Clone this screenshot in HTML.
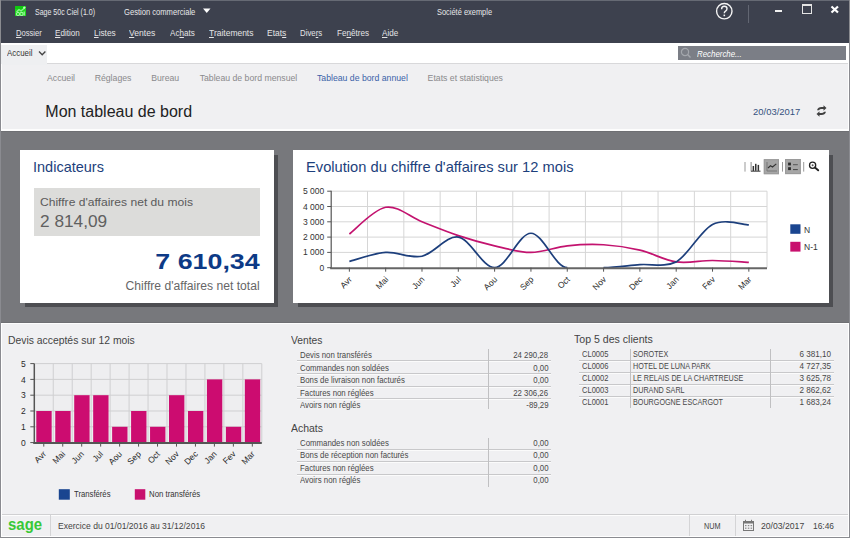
<!DOCTYPE html><html><head><meta charset="utf-8"><style>
html,body{margin:0;padding:0;}
body{width:850px;height:538px;position:relative;overflow:hidden;background:#f0f0f2;font-family:"Liberation Sans",sans-serif;}
div{box-sizing:border-box;}
</style></head><body>
<div style="position:absolute;left:0px;top:0px;width:850px;height:43px;background:#3d414e;"></div>
<div style="position:absolute;left:0px;top:0px;width:850px;height:1px;background:#666a74;"></div>
<div style="position:absolute;top:8.20px;font-size:8.5px;line-height:8.5px;color:#e8e8ea;white-space:pre;left:34.6px;transform:scaleX(0.825);transform-origin:0 0;">Sage 50c Ciel (1.0)</div>
<div style="position:absolute;top:7.85px;font-size:8.8px;line-height:8.8px;color:#e8e8ea;white-space:pre;left:124.1px;transform:scaleX(0.863);transform-origin:0 0;">Gestion commerciale</div>
<svg style="position:absolute;left:203px;top:8px" width="8" height="6"><polygon points="0,0.5 7.5,0.5 3.75,5" fill="#fff"/></svg>
<div style="position:absolute;top:7.85px;font-size:8.8px;line-height:8.8px;color:#e8e8ea;white-space:pre;left:437px;transform:scaleX(0.846);transform-origin:0 0;">Société exemple</div>
<svg style="position:absolute;left:15px;top:6px" width="11" height="10"><rect width="11" height="10" fill="#1fd21f"/><rect width="11" height="3" fill="#10c810"/><path d="M1.5 6 L4 3.5 L6 5 L9.5 2" fill="none" stroke="#8cf58c" stroke-width="1.3"/><circle cx="9.3" cy="1.6" r="1.2" fill="#b8ffb8"/><circle cx="3" cy="8" r="1.6" fill="none" stroke="#9cf79c" stroke-width="1.1"/><circle cx="6.5" cy="8" r="1.6" fill="none" stroke="#9cf79c" stroke-width="1.1"/><path d="M9.2 5.5 V9.5" stroke="#9cf79c" stroke-width="1.2"/></svg>
<svg style="position:absolute;left:714px;top:1px" width="22" height="22"><circle cx="10.3" cy="10.2" r="7.7" fill="none" stroke="#f4f4f4" stroke-width="1.4"/><path d="M7.6 8.2 Q7.6 5.3 10.3 5.3 Q13 5.3 13 7.8 Q13 9.3 11.3 10.3 Q10.3 10.9 10.3 12.3" fill="none" stroke="#f4f4f4" stroke-width="1.4"/><rect x="9.5" y="13.6" width="1.6" height="1.6" fill="#f4f4f4"/></svg>
<div style="position:absolute;left:748px;top:5px;width:1px;height:18px;background:#626672;"></div>
<div style="position:absolute;left:774.5px;top:10px;width:7.5px;height:2px;background:#f0f0f0;"></div>
<svg style="position:absolute;left:801px;top:3px" width="13" height="13"><rect x="1.5" y="1.5" width="9" height="9" fill="none" stroke="#e4e4e4" stroke-width="1"/><rect x="1" y="1" width="10" height="2" fill="#e4e4e4"/></svg>
<svg style="position:absolute;left:830px;top:5px" width="10" height="9"><path d="M1.5 1.5 L8 7.5 M8 1.5 L1.5 7.5" stroke="#fff" stroke-width="2.2"/></svg>
<div style="position:absolute;top:28.95px;font-size:8.8px;line-height:8.8px;color:#e4e4e6;white-space:pre;left:15.8px;transform:scaleX(0.862);transform-origin:0 0;"><u style="text-underline-offset:0.5px">D</u>ossier</div>
<div style="position:absolute;top:28.95px;font-size:8.8px;line-height:8.8px;color:#e4e4e6;white-space:pre;left:55.3px;transform:scaleX(0.918);transform-origin:0 0;"><u style="text-underline-offset:0.5px">E</u>dition</div>
<div style="position:absolute;top:28.95px;font-size:8.8px;line-height:8.8px;color:#e4e4e6;white-space:pre;left:93.9px;transform:scaleX(0.943);transform-origin:0 0;"><u style="text-underline-offset:0.5px">L</u>istes</div>
<div style="position:absolute;top:28.95px;font-size:8.8px;line-height:8.8px;color:#e4e4e6;white-space:pre;left:129.4px;transform:scaleX(0.973);transform-origin:0 0;"><u style="text-underline-offset:0.5px">V</u>entes</div>
<div style="position:absolute;top:28.95px;font-size:8.8px;line-height:8.8px;color:#e4e4e6;white-space:pre;left:170px;transform:scaleX(0.917);transform-origin:0 0;">Ac<u style="text-underline-offset:0.5px">h</u>ats</div>
<div style="position:absolute;top:28.95px;font-size:8.8px;line-height:8.8px;color:#e4e4e6;white-space:pre;left:209px;transform:scaleX(0.964);transform-origin:0 0;"><u style="text-underline-offset:0.5px">T</u>raitements</div>
<div style="position:absolute;top:28.95px;font-size:8.8px;line-height:8.8px;color:#e4e4e6;white-space:pre;left:267.3px;transform:scaleX(0.962);transform-origin:0 0;">Etat<u style="text-underline-offset:0.5px">s</u></div>
<div style="position:absolute;top:28.95px;font-size:8.8px;line-height:8.8px;color:#e4e4e6;white-space:pre;left:300.4px;transform:scaleX(0.890);transform-origin:0 0;">Dive<u style="text-underline-offset:0.5px">r</u>s</div>
<div style="position:absolute;top:28.95px;font-size:8.8px;line-height:8.8px;color:#e4e4e6;white-space:pre;left:336.5px;transform:scaleX(0.924);transform-origin:0 0;">Fe<u style="text-underline-offset:0.5px">n</u>êtres</div>
<div style="position:absolute;top:28.95px;font-size:8.8px;line-height:8.8px;color:#e4e4e6;white-space:pre;left:382px;transform:scaleX(0.919);transform-origin:0 0;"><u style="text-underline-offset:0.5px">A</u>ide</div>
<div style="position:absolute;left:0px;top:43px;width:850px;height:21px;background:#ffffff;"></div>
<div style="position:absolute;left:1px;top:45px;width:46px;height:20px;background:#eeeff1;"></div>
<div style="position:absolute;top:49.05px;font-size:8.8px;line-height:8.8px;color:#333;white-space:pre;left:6.7px;transform:scaleX(0.896);transform-origin:0 0;">Accueil</div>
<svg style="position:absolute;left:38px;top:50px" width="9" height="7"><path d="M1 1.5 L4.2 4.8 L7.4 1.5" fill="none" stroke="#444" stroke-width="1.3"/></svg>
<div style="position:absolute;left:47px;top:63px;width:801px;height:1px;background:#d8d8da;"></div>
<div style="position:absolute;left:678px;top:46px;width:168px;height:14px;background:#7b7e86;"></div>
<svg style="position:absolute;left:680px;top:47px" width="12" height="12"><circle cx="5" cy="5" r="3.6" fill="none" stroke="#a4a7ad" stroke-width="1.2"/><path d="M7.6 7.6 L10.5 10.5" stroke="#a4a7ad" stroke-width="1.4"/></svg>
<div style="position:absolute;top:50.00px;font-size:8.5px;line-height:8.5px;color:#ffffff;white-space:pre;font-style:italic;left:696.9px;transform:scaleX(0.927);transform-origin:0 0;">Recherche...</div>
<div style="position:absolute;top:73.94px;font-size:8.7px;line-height:8.7px;color:#8a8a8c;white-space:pre;left:47px;">Accueil</div>
<div style="position:absolute;top:73.94px;font-size:8.7px;line-height:8.7px;color:#8a8a8c;white-space:pre;left:94.7px;">Réglages</div>
<div style="position:absolute;top:73.94px;font-size:8.7px;line-height:8.7px;color:#8a8a8c;white-space:pre;left:151.2px;">Bureau</div>
<div style="position:absolute;top:73.94px;font-size:8.7px;line-height:8.7px;color:#8a8a8c;white-space:pre;left:199.7px;">Tableau de bord mensuel</div>
<div style="position:absolute;top:73.94px;font-size:8.7px;line-height:8.7px;color:#3a62a8;white-space:pre;left:317px;">Tableau de bord annuel</div>
<div style="position:absolute;top:73.94px;font-size:8.7px;line-height:8.7px;color:#8a8a8c;white-space:pre;left:427.6px;">Etats et statistiques</div>
<div style="position:absolute;top:103.56px;font-size:16px;line-height:16px;color:#222;white-space:pre;left:45.3px;">Mon tableau de bord</div>
<div style="position:absolute;top:107.30px;font-size:9.8px;line-height:9.8px;color:#34527e;white-space:pre;left:752.9px;transform:scaleX(0.964);transform-origin:0 0;">20/03/2017</div>
<svg style="position:absolute;left:815px;top:105px" width="13" height="12"><path d="M2 5.2 Q3 2 6.5 2 L8.5 2 L8.5 0.3 L11.5 3 L8.5 5.7 L8.5 4 L6.5 4 Q4.6 4 4 5.2 Z" fill="#404040"/><path d="M11 6.8 Q10 10 6.5 10 L4.5 10 L4.5 11.7 L1.5 9 L4.5 6.3 L4.5 8 L6.5 8 Q8.4 8 9 6.8 Z" fill="#404040"/></svg>
<div style="position:absolute;left:0px;top:131px;width:850px;height:192px;background:#77787c;"></div>
<div style="position:absolute;left:0px;top:129px;width:850px;height:2px;background:#fdfdfd;"></div>
<div style="position:absolute;left:0px;top:131px;width:850px;height:1px;background:#6e6f73;"></div>
<div style="position:absolute;left:0px;top:322px;width:850px;height:1px;background:#6e6f73;"></div>
<div style="position:absolute;left:0px;top:323px;width:850px;height:1px;background:#fdfdfd;"></div>
<div style="position:absolute;left:25px;top:155px;width:253px;height:152px;background:#4d4e52;"></div>
<div style="position:absolute;left:20px;top:150px;width:254px;height:153px;background:#ffffff;"></div>
<div style="position:absolute;left:298px;top:155px;width:535px;height:152px;background:#4d4e52;"></div>
<div style="position:absolute;left:293px;top:150px;width:536px;height:153px;background:#ffffff;"></div>
<div style="position:absolute;top:160.03px;font-size:14.5px;line-height:14.5px;color:#1d3f7c;white-space:pre;left:33px;">Indicateurs</div>
<div style="position:absolute;left:34px;top:188px;width:226px;height:48px;background:#dcdcda;"></div>
<div style="position:absolute;top:197.29px;font-size:11px;line-height:11px;color:#5a5a5a;white-space:pre;left:40.4px;transform:scaleX(1.098);transform-origin:0 0;">Chiffre d'affaires net du mois</div>
<div style="position:absolute;top:212.73px;font-size:16.5px;line-height:16.5px;color:#606060;white-space:pre;left:40.4px;transform:scaleX(1.045);transform-origin:0 0;">2 814,09</div>
<div style="position:absolute;top:251.38px;font-size:22px;line-height:22px;color:#0d3a86;white-space:pre;font-weight:bold;right:590.3px;transform:scaleX(1.218);transform-origin:100% 0;">7 610,34</div>
<div style="position:absolute;top:280.34px;font-size:12px;line-height:12px;color:#666;white-space:pre;right:590.3px;transform:scaleX(1.011);transform-origin:100% 0;">Chiffre d'affaires net total</div>
<div style="position:absolute;top:160.14px;font-size:14.6px;line-height:14.6px;color:#1d3f7c;white-space:pre;left:305.9px;transform:scaleX(1.006);transform-origin:0 0;">Evolution du chiffre d'affaires sur 12 mois</div>
<svg style="position:absolute;left:0;top:0" width="850" height="538">
<line x1="331.2" y1="252.40" x2="767.0" y2="252.40" stroke="#d6d6d6" stroke-width="1"/>
<line x1="331.2" y1="237.10" x2="767.0" y2="237.10" stroke="#d6d6d6" stroke-width="1"/>
<line x1="331.2" y1="221.80" x2="767.0" y2="221.80" stroke="#d6d6d6" stroke-width="1"/>
<line x1="331.2" y1="206.50" x2="767.0" y2="206.50" stroke="#d6d6d6" stroke-width="1"/>
<line x1="331.2" y1="191.20" x2="767.0" y2="191.20" stroke="#d6d6d6" stroke-width="1"/>
<line x1="367.52" y1="191.2" x2="367.52" y2="267.7" stroke="#d6d6d6" stroke-width="1"/>
<line x1="403.83" y1="191.2" x2="403.83" y2="267.7" stroke="#d6d6d6" stroke-width="1"/>
<line x1="440.15" y1="191.2" x2="440.15" y2="267.7" stroke="#d6d6d6" stroke-width="1"/>
<line x1="476.47" y1="191.2" x2="476.47" y2="267.7" stroke="#d6d6d6" stroke-width="1"/>
<line x1="512.78" y1="191.2" x2="512.78" y2="267.7" stroke="#d6d6d6" stroke-width="1"/>
<line x1="549.10" y1="191.2" x2="549.10" y2="267.7" stroke="#d6d6d6" stroke-width="1"/>
<line x1="585.42" y1="191.2" x2="585.42" y2="267.7" stroke="#d6d6d6" stroke-width="1"/>
<line x1="621.73" y1="191.2" x2="621.73" y2="267.7" stroke="#d6d6d6" stroke-width="1"/>
<line x1="658.05" y1="191.2" x2="658.05" y2="267.7" stroke="#d6d6d6" stroke-width="1"/>
<line x1="694.37" y1="191.2" x2="694.37" y2="267.7" stroke="#d6d6d6" stroke-width="1"/>
<line x1="730.68" y1="191.2" x2="730.68" y2="267.7" stroke="#d6d6d6" stroke-width="1"/>
<line x1="767.00" y1="191.2" x2="767.00" y2="267.7" stroke="#d6d6d6" stroke-width="1"/>
<path d="M349.36 234.04 C355.41 229.58 373.57 209.30 385.68 207.26 C397.78 205.22 409.89 217.08 421.99 221.80 C434.10 226.52 446.20 231.57 458.31 235.57 C470.41 239.57 482.52 243.02 494.62 245.82 C506.73 248.63 518.84 252.40 530.94 252.40 C543.05 252.40 555.15 247.10 567.26 245.82 C579.36 244.55 591.47 244.04 603.58 244.75 C615.68 245.46 627.79 247.25 639.89 250.10 C652.00 252.96 664.10 260.15 676.21 261.89 C688.31 263.62 700.42 260.43 712.53 260.51 C724.63 260.59 742.79 262.04 748.84 262.34" fill="none" stroke="#c3136f" stroke-width="1.7"/>
<path d="M349.36 261.40 C355.41 259.90 373.57 253.26 385.68 252.40 C397.78 251.54 409.89 258.77 421.99 256.22 C434.10 253.67 446.20 235.19 458.31 237.10 C470.41 239.01 482.52 267.70 494.62 267.70 C506.73 267.70 518.84 233.27 530.94 233.27 C543.05 233.27 555.15 267.70 567.26 267.70 M603.58 267.70 C615.68 267.70 627.79 265.61 639.89 264.64 C652.00 263.67 664.10 267.70 676.21 261.89 C688.31 255.18 700.42 230.57 712.53 224.40 C724.63 218.23 742.79 224.78 748.84 224.86" fill="none" stroke="#1d3f7c" stroke-width="1.7"/>
<line x1="331.2" y1="190.7" x2="331.2" y2="268.7" stroke="#555" stroke-width="1.2"/>
<line x1="330.2" y1="268.2" x2="767.0" y2="268.2" stroke="#666" stroke-width="2"/>
<line x1="327.2" y1="267.70" x2="331.2" y2="267.70" stroke="#555" stroke-width="1"/>
<line x1="327.2" y1="252.40" x2="331.2" y2="252.40" stroke="#555" stroke-width="1"/>
<line x1="327.2" y1="237.10" x2="331.2" y2="237.10" stroke="#555" stroke-width="1"/>
<line x1="327.2" y1="221.80" x2="331.2" y2="221.80" stroke="#555" stroke-width="1"/>
<line x1="327.2" y1="206.50" x2="331.2" y2="206.50" stroke="#555" stroke-width="1"/>
<line x1="327.2" y1="191.20" x2="331.2" y2="191.20" stroke="#555" stroke-width="1"/>
<line x1="349.36" y1="267.7" x2="349.36" y2="271.7" stroke="#555" stroke-width="1"/>
<line x1="385.68" y1="267.7" x2="385.68" y2="271.7" stroke="#555" stroke-width="1"/>
<line x1="421.99" y1="267.7" x2="421.99" y2="271.7" stroke="#555" stroke-width="1"/>
<line x1="458.31" y1="267.7" x2="458.31" y2="271.7" stroke="#555" stroke-width="1"/>
<line x1="494.62" y1="267.7" x2="494.62" y2="271.7" stroke="#555" stroke-width="1"/>
<line x1="530.94" y1="267.7" x2="530.94" y2="271.7" stroke="#555" stroke-width="1"/>
<line x1="567.26" y1="267.7" x2="567.26" y2="271.7" stroke="#555" stroke-width="1"/>
<line x1="603.58" y1="267.7" x2="603.58" y2="271.7" stroke="#555" stroke-width="1"/>
<line x1="639.89" y1="267.7" x2="639.89" y2="271.7" stroke="#555" stroke-width="1"/>
<line x1="676.21" y1="267.7" x2="676.21" y2="271.7" stroke="#555" stroke-width="1"/>
<line x1="712.53" y1="267.7" x2="712.53" y2="271.7" stroke="#555" stroke-width="1"/>
<line x1="748.84" y1="267.7" x2="748.84" y2="271.7" stroke="#555" stroke-width="1"/>
<text x="352.56" y="280.00" transform="rotate(-45 352.56 280.00)" text-anchor="end" font-family="Liberation Sans" font-size="8.5" fill="#2a2a2a">Avr</text>
<text x="388.88" y="280.00" transform="rotate(-45 388.88 280.00)" text-anchor="end" font-family="Liberation Sans" font-size="8.5" fill="#2a2a2a">Mai</text>
<text x="425.19" y="280.00" transform="rotate(-45 425.19 280.00)" text-anchor="end" font-family="Liberation Sans" font-size="8.5" fill="#2a2a2a">Jun</text>
<text x="461.51" y="280.00" transform="rotate(-45 461.51 280.00)" text-anchor="end" font-family="Liberation Sans" font-size="8.5" fill="#2a2a2a">Jul</text>
<text x="497.82" y="280.00" transform="rotate(-45 497.82 280.00)" text-anchor="end" font-family="Liberation Sans" font-size="8.5" fill="#2a2a2a">Aou</text>
<text x="534.14" y="280.00" transform="rotate(-45 534.14 280.00)" text-anchor="end" font-family="Liberation Sans" font-size="8.5" fill="#2a2a2a">Sep</text>
<text x="570.46" y="280.00" transform="rotate(-45 570.46 280.00)" text-anchor="end" font-family="Liberation Sans" font-size="8.5" fill="#2a2a2a">Oct</text>
<text x="606.78" y="280.00" transform="rotate(-45 606.78 280.00)" text-anchor="end" font-family="Liberation Sans" font-size="8.5" fill="#2a2a2a">Nov</text>
<text x="643.09" y="280.00" transform="rotate(-45 643.09 280.00)" text-anchor="end" font-family="Liberation Sans" font-size="8.5" fill="#2a2a2a">Dec</text>
<text x="679.41" y="280.00" transform="rotate(-45 679.41 280.00)" text-anchor="end" font-family="Liberation Sans" font-size="8.5" fill="#2a2a2a">Jan</text>
<text x="715.73" y="280.00" transform="rotate(-45 715.73 280.00)" text-anchor="end" font-family="Liberation Sans" font-size="8.5" fill="#2a2a2a">Fev</text>
<text x="752.04" y="280.00" transform="rotate(-45 752.04 280.00)" text-anchor="end" font-family="Liberation Sans" font-size="8.5" fill="#2a2a2a">Mar</text>
<text x="324.2" y="270.70" text-anchor="end" font-family="Liberation Sans" font-size="8.5" fill="#333">0</text>
<text x="324.2" y="255.40" text-anchor="end" font-family="Liberation Sans" font-size="8.5" fill="#333">1 000</text>
<text x="324.2" y="240.10" text-anchor="end" font-family="Liberation Sans" font-size="8.5" fill="#333">2 000</text>
<text x="324.2" y="224.80" text-anchor="end" font-family="Liberation Sans" font-size="8.5" fill="#333">3 000</text>
<text x="324.2" y="209.50" text-anchor="end" font-family="Liberation Sans" font-size="8.5" fill="#333">4 000</text>
<text x="324.2" y="194.20" text-anchor="end" font-family="Liberation Sans" font-size="8.5" fill="#333">5 000</text>
<rect x="790.3" y="224.3" width="10.2" height="9.5" fill="#1a4590"/>
<rect x="790.3" y="241.8" width="10.2" height="9.8" fill="#c8106e"/>
<text x="804" y="232.5" font-family="Liberation Sans" font-size="8.5" fill="#333">N</text>
<text x="804" y="250" font-family="Liberation Sans" font-size="8.5" fill="#333">N-1</text>
<rect x="744.5" y="162" width="1" height="9.6" fill="#999"/>
<rect x="782" y="162" width="1" height="9.6" fill="#999"/>
<rect x="803.2" y="162" width="1" height="9.6" fill="#999"/>
<rect x="750.6" y="162" width="1" height="9.5" fill="#888"/><rect x="751" y="170.6" width="9.5" height="1.2" fill="#555"/>
<rect x="752.6" y="166" width="1.5" height="5" fill="#333"/><rect x="755" y="163.8" width="1.5" height="7" fill="#333"/><rect x="757.6" y="164.9" width="1.5" height="6" fill="#333"/>
<rect x="763.8" y="159.2" width="15.2" height="15" fill="#a6a6a6"/><rect x="764.3" y="159.7" width="14.2" height="14" fill="none" stroke="#9a9a9a" stroke-width="1"/>
<path d="M767 162 V171 H777" fill="none" stroke="#777" stroke-width="1"/><path d="M768 168 L770.5 165.8 L772.5 167 L776.3 163.8" fill="none" stroke="#333" stroke-width="1.1"/>
<rect x="785" y="159" width="15.8" height="15.1" fill="#a6a6a6"/><rect x="785.5" y="159.5" width="14.8" height="14.1" fill="none" stroke="#9a9a9a" stroke-width="1"/>
<rect x="788.1" y="162.6" width="2.8" height="2.8" fill="#2a2a2a"/><rect x="788.1" y="167.2" width="2.8" height="2.9" fill="#2a2a2a"/><rect x="793" y="164.2" width="4.8" height="1" fill="#555"/><rect x="793" y="169.1" width="4.8" height="1" fill="#444"/>
<circle cx="812.6" cy="165.2" r="3.1" fill="none" stroke="#222" stroke-width="1.3"/><circle cx="812.6" cy="165.2" r="1" fill="#555"/><path d="M814.9 167.5 L818.2 170.3" stroke="#222" stroke-width="1.9" stroke-linecap="round"/>
<rect x="34.3" y="363.6" width="227.5" height="79.0" fill="#eeeef0"/>
<line x1="34.3" y1="426.80" x2="261.8" y2="426.80" stroke="#cfcfd1" stroke-width="1"/>
<line x1="34.3" y1="411.00" x2="261.8" y2="411.00" stroke="#cfcfd1" stroke-width="1"/>
<line x1="34.3" y1="395.20" x2="261.8" y2="395.20" stroke="#cfcfd1" stroke-width="1"/>
<line x1="34.3" y1="379.40" x2="261.8" y2="379.40" stroke="#cfcfd1" stroke-width="1"/>
<line x1="34.3" y1="363.60" x2="261.8" y2="363.60" stroke="#cfcfd1" stroke-width="1"/>
<line x1="53.26" y1="363.6" x2="53.26" y2="442.6" stroke="#cfcfd1" stroke-width="1"/>
<line x1="72.22" y1="363.6" x2="72.22" y2="442.6" stroke="#cfcfd1" stroke-width="1"/>
<line x1="91.17" y1="363.6" x2="91.17" y2="442.6" stroke="#cfcfd1" stroke-width="1"/>
<line x1="110.13" y1="363.6" x2="110.13" y2="442.6" stroke="#cfcfd1" stroke-width="1"/>
<line x1="129.09" y1="363.6" x2="129.09" y2="442.6" stroke="#cfcfd1" stroke-width="1"/>
<line x1="148.05" y1="363.6" x2="148.05" y2="442.6" stroke="#cfcfd1" stroke-width="1"/>
<line x1="167.01" y1="363.6" x2="167.01" y2="442.6" stroke="#cfcfd1" stroke-width="1"/>
<line x1="185.97" y1="363.6" x2="185.97" y2="442.6" stroke="#cfcfd1" stroke-width="1"/>
<line x1="204.93" y1="363.6" x2="204.93" y2="442.6" stroke="#cfcfd1" stroke-width="1"/>
<line x1="223.88" y1="363.6" x2="223.88" y2="442.6" stroke="#cfcfd1" stroke-width="1"/>
<line x1="242.84" y1="363.6" x2="242.84" y2="442.6" stroke="#cfcfd1" stroke-width="1"/>
<line x1="261.80" y1="363.6" x2="261.80" y2="442.6" stroke="#cfcfd1" stroke-width="1"/>
<rect x="36.30" y="411.00" width="15.36" height="31.60" fill="#cc0c70"/>
<rect x="55.26" y="411.00" width="15.36" height="31.60" fill="#cc0c70"/>
<rect x="74.22" y="395.20" width="15.36" height="47.40" fill="#cc0c70"/>
<rect x="93.17" y="395.20" width="15.36" height="47.40" fill="#cc0c70"/>
<rect x="112.13" y="426.80" width="15.36" height="15.80" fill="#cc0c70"/>
<rect x="131.09" y="411.00" width="15.36" height="31.60" fill="#cc0c70"/>
<rect x="150.05" y="426.80" width="15.36" height="15.80" fill="#cc0c70"/>
<rect x="169.01" y="395.20" width="15.36" height="47.40" fill="#cc0c70"/>
<rect x="187.97" y="411.00" width="15.36" height="31.60" fill="#cc0c70"/>
<rect x="206.93" y="379.40" width="15.36" height="63.20" fill="#cc0c70"/>
<rect x="225.88" y="426.80" width="15.36" height="15.80" fill="#cc0c70"/>
<rect x="244.84" y="379.40" width="15.36" height="63.20" fill="#cc0c70"/>
<line x1="34.3" y1="363.6" x2="34.3" y2="443.6" stroke="#555" stroke-width="1.5"/>
<line x1="33.3" y1="443.1" x2="261.8" y2="443.1" stroke="#555" stroke-width="2"/>
<line x1="30.299999999999997" y1="442.60" x2="34.3" y2="442.60" stroke="#555" stroke-width="1"/>
<text x="25.799999999999997" y="445.80" text-anchor="end" font-family="Liberation Sans" font-size="8.5" fill="#2a2a2a">0</text>
<line x1="30.299999999999997" y1="426.80" x2="34.3" y2="426.80" stroke="#555" stroke-width="1"/>
<text x="25.799999999999997" y="430.00" text-anchor="end" font-family="Liberation Sans" font-size="8.5" fill="#2a2a2a">1</text>
<line x1="30.299999999999997" y1="411.00" x2="34.3" y2="411.00" stroke="#555" stroke-width="1"/>
<text x="25.799999999999997" y="414.20" text-anchor="end" font-family="Liberation Sans" font-size="8.5" fill="#2a2a2a">2</text>
<line x1="30.299999999999997" y1="395.20" x2="34.3" y2="395.20" stroke="#555" stroke-width="1"/>
<text x="25.799999999999997" y="398.40" text-anchor="end" font-family="Liberation Sans" font-size="8.5" fill="#2a2a2a">3</text>
<line x1="30.299999999999997" y1="379.40" x2="34.3" y2="379.40" stroke="#555" stroke-width="1"/>
<text x="25.799999999999997" y="382.60" text-anchor="end" font-family="Liberation Sans" font-size="8.5" fill="#2a2a2a">4</text>
<line x1="30.299999999999997" y1="363.60" x2="34.3" y2="363.60" stroke="#555" stroke-width="1"/>
<text x="25.799999999999997" y="366.80" text-anchor="end" font-family="Liberation Sans" font-size="8.5" fill="#2a2a2a">5</text>
<line x1="43.78" y1="442.6" x2="43.78" y2="446.6" stroke="#555" stroke-width="1"/>
<text x="46.78" y="454.60" transform="rotate(-45 46.78 454.60)" text-anchor="end" font-family="Liberation Sans" font-size="8.5" fill="#2a2a2a">Avr</text>
<line x1="62.74" y1="442.6" x2="62.74" y2="446.6" stroke="#555" stroke-width="1"/>
<text x="65.74" y="454.60" transform="rotate(-45 65.74 454.60)" text-anchor="end" font-family="Liberation Sans" font-size="8.5" fill="#2a2a2a">Mai</text>
<line x1="81.70" y1="442.6" x2="81.70" y2="446.6" stroke="#555" stroke-width="1"/>
<text x="84.70" y="454.60" transform="rotate(-45 84.70 454.60)" text-anchor="end" font-family="Liberation Sans" font-size="8.5" fill="#2a2a2a">Jun</text>
<line x1="100.65" y1="442.6" x2="100.65" y2="446.6" stroke="#555" stroke-width="1"/>
<text x="103.65" y="454.60" transform="rotate(-45 103.65 454.60)" text-anchor="end" font-family="Liberation Sans" font-size="8.5" fill="#2a2a2a">Jul</text>
<line x1="119.61" y1="442.6" x2="119.61" y2="446.6" stroke="#555" stroke-width="1"/>
<text x="122.61" y="454.60" transform="rotate(-45 122.61 454.60)" text-anchor="end" font-family="Liberation Sans" font-size="8.5" fill="#2a2a2a">Aou</text>
<line x1="138.57" y1="442.6" x2="138.57" y2="446.6" stroke="#555" stroke-width="1"/>
<text x="141.57" y="454.60" transform="rotate(-45 141.57 454.60)" text-anchor="end" font-family="Liberation Sans" font-size="8.5" fill="#2a2a2a">Sep</text>
<line x1="157.53" y1="442.6" x2="157.53" y2="446.6" stroke="#555" stroke-width="1"/>
<text x="160.53" y="454.60" transform="rotate(-45 160.53 454.60)" text-anchor="end" font-family="Liberation Sans" font-size="8.5" fill="#2a2a2a">Oct</text>
<line x1="176.49" y1="442.6" x2="176.49" y2="446.6" stroke="#555" stroke-width="1"/>
<text x="179.49" y="454.60" transform="rotate(-45 179.49 454.60)" text-anchor="end" font-family="Liberation Sans" font-size="8.5" fill="#2a2a2a">Nov</text>
<line x1="195.45" y1="442.6" x2="195.45" y2="446.6" stroke="#555" stroke-width="1"/>
<text x="198.45" y="454.60" transform="rotate(-45 198.45 454.60)" text-anchor="end" font-family="Liberation Sans" font-size="8.5" fill="#2a2a2a">Dec</text>
<line x1="214.40" y1="442.6" x2="214.40" y2="446.6" stroke="#555" stroke-width="1"/>
<text x="217.40" y="454.60" transform="rotate(-45 217.40 454.60)" text-anchor="end" font-family="Liberation Sans" font-size="8.5" fill="#2a2a2a">Jan</text>
<line x1="233.36" y1="442.6" x2="233.36" y2="446.6" stroke="#555" stroke-width="1"/>
<text x="236.36" y="454.60" transform="rotate(-45 236.36 454.60)" text-anchor="end" font-family="Liberation Sans" font-size="8.5" fill="#2a2a2a">Fev</text>
<line x1="252.32" y1="442.6" x2="252.32" y2="446.6" stroke="#555" stroke-width="1"/>
<text x="255.32" y="454.60" transform="rotate(-45 255.32 454.60)" text-anchor="end" font-family="Liberation Sans" font-size="8.5" fill="#2a2a2a">Mar</text>
<rect x="58.8" y="489.2" width="11" height="10.5" fill="#1a4590"/>
<rect x="134.8" y="489.2" width="10.5" height="10.5" fill="#c8106e"/>
</svg>
<div style="position:absolute;top:490.18px;font-size:9px;line-height:9px;color:#333;white-space:pre;left:73.6px;transform:scaleX(0.855);transform-origin:0 0;">Transférés</div>
<div style="position:absolute;top:490.18px;font-size:9px;line-height:9px;color:#333;white-space:pre;left:148.9px;transform:scaleX(0.866);transform-origin:0 0;">Non transférés</div>
<div style="position:absolute;top:335.12px;font-size:11.2px;line-height:11.2px;color:#444;white-space:pre;left:8.4px;transform:scaleX(0.927);transform-origin:0 0;">Devis acceptés sur 12 mois</div>
<div style="position:absolute;top:335.06px;font-size:10.8px;line-height:10.8px;color:#444;white-space:pre;left:290.7px;transform:scaleX(0.951);transform-origin:0 0;">Ventes</div>
<div style="position:absolute;top:423.26px;font-size:10.8px;line-height:10.8px;color:#444;white-space:pre;left:290.7px;transform:scaleX(0.969);transform-origin:0 0;">Achats</div>
<div style="position:absolute;left:297px;top:360px;width:254px;height:1px;background:#c8c8ca;"></div>
<div style="position:absolute;left:297px;top:361px;width:254px;height:1px;background:#fbfbfb;"></div>
<div style="position:absolute;left:297px;top:373px;width:254px;height:1px;background:#c8c8ca;"></div>
<div style="position:absolute;left:297px;top:374px;width:254px;height:1px;background:#fbfbfb;"></div>
<div style="position:absolute;left:297px;top:386px;width:254px;height:1px;background:#c8c8ca;"></div>
<div style="position:absolute;left:297px;top:387px;width:254px;height:1px;background:#fbfbfb;"></div>
<div style="position:absolute;left:297px;top:398px;width:254px;height:1px;background:#c8c8ca;"></div>
<div style="position:absolute;left:297px;top:399px;width:254px;height:1px;background:#fbfbfb;"></div>
<div style="position:absolute;left:487.6px;top:349px;width:1px;height:60px;background:#c0c0c2;"></div>
<div style="position:absolute;top:351.18px;font-size:9px;line-height:9px;color:#484848;white-space:pre;left:299.5px;transform:scaleX(0.870);transform-origin:0 0;">Devis non transférés</div>
<div style="position:absolute;top:351.18px;font-size:9px;line-height:9px;color:#484848;white-space:pre;right:301.5px;transform:scaleX(0.870);transform-origin:100% 0;">24 290,28</div>
<div style="position:absolute;top:363.68px;font-size:9px;line-height:9px;color:#484848;white-space:pre;left:299.5px;transform:scaleX(0.870);transform-origin:0 0;">Commandes non soldées</div>
<div style="position:absolute;top:363.68px;font-size:9px;line-height:9px;color:#484848;white-space:pre;right:301.5px;transform:scaleX(0.870);transform-origin:100% 0;">0,00</div>
<div style="position:absolute;top:376.18px;font-size:9px;line-height:9px;color:#484848;white-space:pre;left:299.5px;transform:scaleX(0.870);transform-origin:0 0;">Bons de livraison non facturés</div>
<div style="position:absolute;top:376.18px;font-size:9px;line-height:9px;color:#484848;white-space:pre;right:301.5px;transform:scaleX(0.870);transform-origin:100% 0;">0,00</div>
<div style="position:absolute;top:388.68px;font-size:9px;line-height:9px;color:#484848;white-space:pre;left:299.5px;transform:scaleX(0.870);transform-origin:0 0;">Factures non réglées</div>
<div style="position:absolute;top:388.68px;font-size:9px;line-height:9px;color:#484848;white-space:pre;right:301.5px;transform:scaleX(0.870);transform-origin:100% 0;">22 306,26</div>
<div style="position:absolute;top:401.18px;font-size:9px;line-height:9px;color:#484848;white-space:pre;left:299.5px;transform:scaleX(0.870);transform-origin:0 0;">Avoirs non réglés</div>
<div style="position:absolute;top:401.18px;font-size:9px;line-height:9px;color:#484848;white-space:pre;right:301.5px;transform:scaleX(0.870);transform-origin:100% 0;">-89,29</div>
<div style="position:absolute;left:297px;top:449px;width:254px;height:1px;background:#c8c8ca;"></div>
<div style="position:absolute;left:297px;top:450px;width:254px;height:1px;background:#fbfbfb;"></div>
<div style="position:absolute;left:297px;top:461px;width:254px;height:1px;background:#c8c8ca;"></div>
<div style="position:absolute;left:297px;top:462px;width:254px;height:1px;background:#fbfbfb;"></div>
<div style="position:absolute;left:297px;top:474px;width:254px;height:1px;background:#c8c8ca;"></div>
<div style="position:absolute;left:297px;top:475px;width:254px;height:1px;background:#fbfbfb;"></div>
<div style="position:absolute;left:487.9px;top:437.5px;width:1px;height:49.0px;background:#c0c0c2;"></div>
<div style="position:absolute;top:438.68px;font-size:9px;line-height:9px;color:#484848;white-space:pre;left:299.5px;transform:scaleX(0.870);transform-origin:0 0;">Commandes non soldées</div>
<div style="position:absolute;top:438.68px;font-size:9px;line-height:9px;color:#484848;white-space:pre;right:301.5px;transform:scaleX(0.870);transform-origin:100% 0;">0,00</div>
<div style="position:absolute;top:451.18px;font-size:9px;line-height:9px;color:#484848;white-space:pre;left:299.5px;transform:scaleX(0.870);transform-origin:0 0;">Bons de réception non facturés</div>
<div style="position:absolute;top:451.18px;font-size:9px;line-height:9px;color:#484848;white-space:pre;right:301.5px;transform:scaleX(0.870);transform-origin:100% 0;">0,00</div>
<div style="position:absolute;top:463.68px;font-size:9px;line-height:9px;color:#484848;white-space:pre;left:299.5px;transform:scaleX(0.870);transform-origin:0 0;">Factures non réglées</div>
<div style="position:absolute;top:463.68px;font-size:9px;line-height:9px;color:#484848;white-space:pre;right:301.5px;transform:scaleX(0.870);transform-origin:100% 0;">0,00</div>
<div style="position:absolute;top:476.18px;font-size:9px;line-height:9px;color:#484848;white-space:pre;left:299.5px;transform:scaleX(0.870);transform-origin:0 0;">Avoirs non réglés</div>
<div style="position:absolute;top:476.18px;font-size:9px;line-height:9px;color:#484848;white-space:pre;right:301.5px;transform:scaleX(0.870);transform-origin:100% 0;">0,00</div>
<div style="position:absolute;top:334.49px;font-size:11px;line-height:11px;color:#444;white-space:pre;left:573.5px;transform:scaleX(0.962);transform-origin:0 0;">Top 5 des clients</div>
<div style="position:absolute;left:579px;top:360px;width:255px;height:1px;background:#c8c8ca;"></div>
<div style="position:absolute;left:579px;top:361px;width:255px;height:1px;background:#fbfbfb;"></div>
<div style="position:absolute;left:579px;top:372px;width:255px;height:1px;background:#c8c8ca;"></div>
<div style="position:absolute;left:579px;top:373px;width:255px;height:1px;background:#fbfbfb;"></div>
<div style="position:absolute;left:579px;top:384px;width:255px;height:1px;background:#c8c8ca;"></div>
<div style="position:absolute;left:579px;top:385px;width:255px;height:1px;background:#fbfbfb;"></div>
<div style="position:absolute;left:579px;top:396px;width:255px;height:1px;background:#c8c8ca;"></div>
<div style="position:absolute;left:579px;top:397px;width:255px;height:1px;background:#fbfbfb;"></div>
<div style="position:absolute;left:630px;top:349px;width:1px;height:59px;background:#c0c0c2;"></div>
<div style="position:absolute;left:770px;top:349px;width:1px;height:59px;background:#c0c0c2;"></div>
<div style="position:absolute;top:350.28px;font-size:9px;line-height:9px;color:#484848;white-space:pre;left:581.8px;transform:scaleX(0.840);transform-origin:0 0;">CL0005</div>
<div style="position:absolute;top:350.28px;font-size:9px;line-height:9px;color:#484848;white-space:pre;left:633px;transform:scaleX(0.800);transform-origin:0 0;">SOROTEX</div>
<div style="position:absolute;top:350.28px;font-size:9px;line-height:9px;color:#484848;white-space:pre;right:19px;transform:scaleX(0.900);transform-origin:100% 0;">6 381,10</div>
<div style="position:absolute;top:362.28px;font-size:9px;line-height:9px;color:#484848;white-space:pre;left:581.8px;transform:scaleX(0.840);transform-origin:0 0;">CL0006</div>
<div style="position:absolute;top:362.28px;font-size:9px;line-height:9px;color:#484848;white-space:pre;left:633px;transform:scaleX(0.800);transform-origin:0 0;">HOTEL DE LUNA PARK</div>
<div style="position:absolute;top:362.28px;font-size:9px;line-height:9px;color:#484848;white-space:pre;right:19px;transform:scaleX(0.900);transform-origin:100% 0;">4 727,35</div>
<div style="position:absolute;top:374.28px;font-size:9px;line-height:9px;color:#484848;white-space:pre;left:581.8px;transform:scaleX(0.840);transform-origin:0 0;">CL0002</div>
<div style="position:absolute;top:374.28px;font-size:9px;line-height:9px;color:#484848;white-space:pre;left:633px;transform:scaleX(0.800);transform-origin:0 0;">LE RELAIS DE LA CHARTREUSE</div>
<div style="position:absolute;top:374.28px;font-size:9px;line-height:9px;color:#484848;white-space:pre;right:19px;transform:scaleX(0.900);transform-origin:100% 0;">3 625,78</div>
<div style="position:absolute;top:386.28px;font-size:9px;line-height:9px;color:#484848;white-space:pre;left:581.8px;transform:scaleX(0.840);transform-origin:0 0;">CL0003</div>
<div style="position:absolute;top:386.28px;font-size:9px;line-height:9px;color:#484848;white-space:pre;left:633px;transform:scaleX(0.800);transform-origin:0 0;">DURAND SARL</div>
<div style="position:absolute;top:386.28px;font-size:9px;line-height:9px;color:#484848;white-space:pre;right:19px;transform:scaleX(0.900);transform-origin:100% 0;">2 862,62</div>
<div style="position:absolute;top:398.28px;font-size:9px;line-height:9px;color:#484848;white-space:pre;left:581.8px;transform:scaleX(0.840);transform-origin:0 0;">CL0001</div>
<div style="position:absolute;top:398.28px;font-size:9px;line-height:9px;color:#484848;white-space:pre;left:633px;transform:scaleX(0.800);transform-origin:0 0;">BOURGOGNE ESCARGOT</div>
<div style="position:absolute;top:398.28px;font-size:9px;line-height:9px;color:#484848;white-space:pre;right:19px;transform:scaleX(0.900);transform-origin:100% 0;">1 683,24</div>
<div style="position:absolute;left:0px;top:514px;width:850px;height:1px;background:#d0d0d2;"></div>
<div style="position:absolute;left:0px;top:515px;width:850px;height:1px;background:#fdfdfd;"></div>
<div style="position:absolute;left:49.5px;top:515px;width:1px;height:22px;background:#d4d4d6;"></div>
<div style="position:absolute;left:688.5px;top:515px;width:1px;height:22px;background:#d4d4d6;"></div>
<div style="position:absolute;left:735px;top:515px;width:1px;height:22px;background:#d4d4d6;"></div>
<div style="position:absolute;top:515.51px;font-size:17px;line-height:17px;color:#38c838;white-space:pre;font-weight:bold;left:7.8px;transform:scaleX(0.880);transform-origin:0 0;">sage</div>
<div style="position:absolute;top:521.36px;font-size:9.5px;line-height:9.5px;color:#444;white-space:pre;left:57.5px;transform:scaleX(0.900);transform-origin:0 0;">Exercice du 01/01/2016 au 31/12/2016</div>
<div style="position:absolute;top:521.78px;font-size:9px;line-height:9px;color:#444;white-space:pre;left:703.9px;transform:scaleX(0.805);transform-origin:0 0;">NUM</div>
<div style="position:absolute;top:521.36px;font-size:9.5px;line-height:9.5px;color:#444;white-space:pre;left:760.7px;transform:scaleX(0.909);transform-origin:0 0;">20/03/2017</div>
<div style="position:absolute;top:521.36px;font-size:9.5px;line-height:9.5px;color:#444;white-space:pre;left:813.2px;transform:scaleX(0.883);transform-origin:0 0;">16:46</div>
<svg style="position:absolute;left:742px;top:519px" width="13" height="13"><rect x="1.5" y="2.5" width="10" height="9" fill="none" stroke="#777" stroke-width="1"/><rect x="1.5" y="2.5" width="10" height="2" fill="#777"/><rect x="3" y="0.8" width="1" height="2.5" fill="#777"/><rect x="9" y="0.8" width="1" height="2.5" fill="#777"/><g fill="#888"><rect x="3" y="6" width="1.5" height="1.2"/><rect x="5.8" y="6" width="1.5" height="1.2"/><rect x="8.6" y="6" width="1.5" height="1.2"/><rect x="3" y="8.6" width="1.5" height="1.2"/><rect x="5.8" y="8.6" width="1.5" height="1.2"/><rect x="8.6" y="8.6" width="1.5" height="1.2"/></g></svg>
<div style="position:absolute;left:0px;top:0px;width:1px;height:538px;background:#8a8b90;"></div>
<div style="position:absolute;left:849px;top:0px;width:1px;height:538px;background:#8a8b90;"></div>
<div style="position:absolute;left:0px;top:537px;width:850px;height:1px;background:#8a8b90;"></div>
<div style="position:absolute;left:848px;top:43px;width:1px;height:88px;background:#ffffff;"></div>
<div style="position:absolute;left:848px;top:323px;width:1px;height:214px;background:#ffffff;"></div>
<div style="position:absolute;left:1px;top:64px;width:1px;height:66px;background:#ffffff;"></div>
<div style="position:absolute;left:1px;top:323px;width:1px;height:214px;background:#ffffff;"></div>
<div style="position:absolute;left:1px;top:536px;width:848px;height:1px;background:#ffffff;"></div>
</body></html>
